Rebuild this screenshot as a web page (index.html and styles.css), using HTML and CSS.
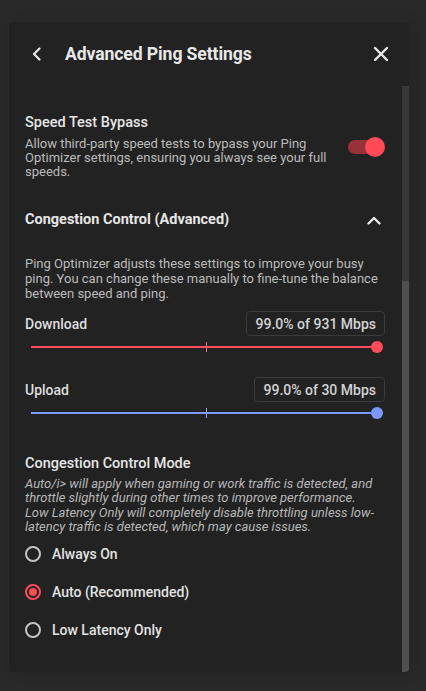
FILE: index.html
```html
<!DOCTYPE html>
<html>
<head>
<meta charset="utf-8">
<link rel="stylesheet" href="styles.css">
</head>
<body>
<div class="panel">
  <header class="hdr">
    <svg class="back" width="10" height="14" viewBox="0 0 10 14"><path d="M7.5 1.5 L2 7 L7.5 12.5" fill="none" stroke="#e8e8e8" stroke-width="2.2" stroke-linecap="round" stroke-linejoin="round"/></svg>
    <h1 class="title">Advanced Ping Settings</h1>
    <svg class="close" width="16" height="16" viewBox="0 0 16 16"><path d="M2 2 L14 14 M14 2 L2 14" fill="none" stroke="#e8e8e8" stroke-width="2.4" stroke-linecap="round"/></svg>
  </header>
  <div class="body">
    <div class="content">
      <div class="bypass">
        <div class="bypass-text">
          <div class="h2">Speed Test Bypass</div>
          <div class="desc">Allow third-party speed tests to bypass your Ping Optimizer settings, ensuring you always see your full speeds.</div>
        </div>
        <div class="toggle"><div class="track"></div><div class="knob"></div></div>
      </div>

      <div class="cc-head">
        <div class="h3">Congestion Control (Advanced)</div>
        <svg class="chev" width="14" height="9" viewBox="0 0 14 9"><path d="M1.5 7.5 L7 2 L12.5 7.5" fill="none" stroke="#e8e8e8" stroke-width="2.4" stroke-linecap="round" stroke-linejoin="round"/></svg>
      </div>
      <div class="desc desc2">Ping Optimizer adjusts these settings to improve your busy ping. You can change these manually to fine-tune the balance between speed and ping.</div>

      <div class="val-row first">
        <div class="label">Download</div>
        <div class="val">99.0% of 931 Mbps</div>
      </div>
      <div class="slider red">
        <div class="rail"><div class="tick"></div><div class="thumb" style="left:99%"></div></div>
      </div>

      <div class="val-row">
        <div class="label">Upload</div>
        <div class="val">99.0% of 30 Mbps</div>
      </div>
      <div class="slider blue">
        <div class="rail"><div class="tick"></div><div class="thumb" style="left:99%"></div></div>
      </div>

      <div class="h2 mode-title">Congestion Control Mode</div>
      <div class="mode-desc">Auto/i&gt; will apply when gaming or work traffic is detected, and throttle slightly during other times to improve performance.<br>Low Latency Only will completely disable throttling unless low-latency traffic is detected, which may cause issues.</div>

      <div class="radios">
        <div class="radio"><span class="circle"></span><span class="rlabel">Always On</span></div>
        <div class="radio on"><span class="circle"></span><span class="rlabel">Auto (Recommended)</span></div>
        <div class="radio"><span class="circle"></span><span class="rlabel">Low Latency Only</span></div>
      </div>
    </div>
    <div class="scrollbar"><div class="sthumb"></div></div>
  </div>
</div>
</body>
</html>
```
FILE: styles.css
```css
* { box-sizing: border-box; }
html, body { margin: 0; padding: 0; }
body {
  background: #292929;
  font-family: Roboto, "Liberation Sans", Arial, sans-serif;
  color: #e4e4e4;
  width: 426px;
  height: 691px;
  overflow: hidden;
  padding-top: 22px;
  padding-left: 9px;
}
.panel {
  width: 400px;
  height: 650px;
  background: #222222;
  border-radius: 4px;
  display: flex;
  flex-direction: column;
  overflow: hidden;
  box-shadow: 6px 0 14px rgba(0,0,0,0.12);
}
.hdr {
  height: 64px;
  flex: none;
  display: flex;
  align-items: center;
  padding: 0 20px 0 23px;
}
.back { display: block; flex: none; }
.title {
  margin: 0 0 0 23px;
  font-size: 17.6px;
  font-weight: 700;
  color: #e8e8e8;
  flex: 1;
  letter-spacing: -0.1px;
}
.close { display: block; flex: none; }
.body {
  flex: 1;
  display: flex;
  min-height: 0;
}
.content {
  flex: 1;
  padding: 28px 17px 0 16px;
}
.scrollbar {
  width: 7px;
  flex: none;
  background: #383838;
  display: flex;
  flex-direction: column;
}
.sthumb {
  margin-top: 195px;
  flex: 1;
  background: #4f4f4f;
}
.h2 {
  font-size: 14.5px;
  line-height: 18px;
  font-weight: 500;
  color: #e6e6e6;
}
.h3 {
  font-size: 14.5px;
  line-height: 18px;
  font-weight: 700;
  color: #e6e6e6;
}
.desc {
  font-size: 13px;
  line-height: 14px;
  color: #bcbcbc;
}
.bypass {
  display: flex;
  align-items: center;
  justify-content: space-between;
}
.bypass-text { width: 318px; }
.bypass-text .h2 { margin-bottom: 5px; }
.toggle {
  position: relative;
  width: 37px;
  height: 20px;
  flex: none;
}
.track {
  position: absolute;
  left: 0;
  top: 3px;
  width: 30px;
  height: 14px;
  border-radius: 7px;
  background: #9a3139;
}
.knob {
  position: absolute;
  right: 0;
  top: 0;
  width: 20px;
  height: 20px;
  border-radius: 50%;
  background: #ff4b57;
}
.cc-head {
  margin-top: 32px;
  display: flex;
  align-items: center;
  justify-content: space-between;
}
.chev { display: block; margin-right: 4px; }
.desc2 {
  margin-top: 27px;
  line-height: 15px;
}
.val-row {
  margin-top: 19px;
  height: 25px;
  display: flex;
  align-items: center;
  justify-content: space-between;
}
.val-row.first { margin-top: 10px; }
.label {
  font-size: 14px;
  font-weight: 500;
  color: #dedede;
}
.val {
  height: 25px;
  border: 1px solid #3b3b3b;
  border-radius: 4px;
  padding: 0 8px 0 9px;
  display: flex;
  align-items: center;
  font-size: 14px;
  font-weight: 500;
  color: #d2d2d2;
}
.slider {
  height: 22px;
  padding: 0 5px 0 6px;
  display: flex;
  align-items: center;
}
.rail {
  position: relative;
  flex: 1;
  height: 2px;
}
.red .rail { background: #ff4c5b; }
.blue .rail { background: #7b98ff; }
.tick {
  position: absolute;
  left: 50%;
  top: -4px;
  width: 1px;
  height: 10px;
}
.red .tick { background: #ff6a76; }
.blue .tick { background: #93abff; }
.thumb {
  position: absolute;
  top: -5px;
  width: 12px;
  height: 12px;
  margin-left: -6px;
  border-radius: 50%;
}
.red .thumb { background: #ff4c5b; }
.blue .thumb { background: #7b98ff; }
.mode-title { margin-top: 31px; }
.mode-desc {
  margin-top: 4px;
  font-size: 13px;
  line-height: 14.4px;
  font-style: italic;
  color: #b8b8b8;
}
.radios { display: flex; flex-direction: column; }
.radio {
  height: 38px;
  display: flex;
  align-items: center;
  gap: 11px;
}
.circle {
  width: 16px;
  height: 16px;
  border: 2px solid #c4c4c4;
  border-radius: 50%;
  display: flex;
  align-items: center;
  justify-content: center;
  flex: none;
}
.radio.on .circle { border-color: #ff4b57; }
.radio.on .circle::after {
  content: "";
  width: 8px;
  height: 8px;
  border-radius: 50%;
  background: #ff4b57;
}
.rlabel {
  font-size: 14px;
  font-weight: 500;
  color: #e2e2e2;
}
```
